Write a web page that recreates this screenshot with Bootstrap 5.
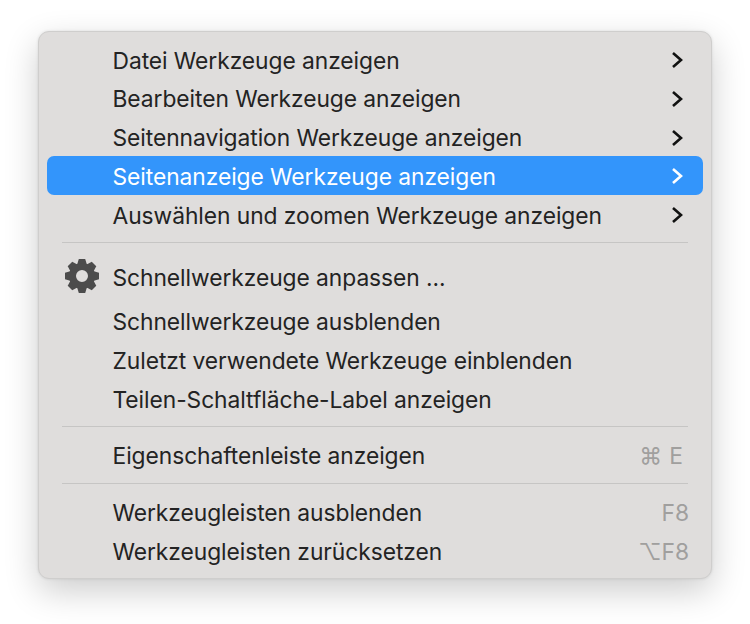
<!DOCTYPE html>
<html lang="de">
<head>
    <meta charset="UTF-8">
    <meta name="viewport" content="width=device-width, initial-scale=1.0">
    <title>Werkzeuge Menü</title>
    <link href="https://cdn.jsdelivr.net/npm/bootstrap@5.3.0/dist/css/bootstrap.min.css" rel="stylesheet">
    <style>
        body { background: #fff; font-family: "Inter", "Liberation Sans", sans-serif; padding: 31px 38px 0; min-height: 624px; }
        .ctx-menu.dropdown-menu {
            position: static; display: block; width: 674px; height: 548px; padding: 8px 8px 7px;
            background: #dfdddc; border: 1px solid #cfcecd; border-radius: 11px;
            box-shadow: 0 12px 34px rgba(0, 0, 0, .2), 0 0 3px rgba(0, 0, 0, .1);
        }
        .ctx-menu .dropdown-item {
            height: 38.7px; padding: 3px 14px 0 65.5px; border-radius: 7px;
            font-size: 22.8px; letter-spacing: -.06px; color: #232323; background: transparent;
        }
        .ctx-menu .dropdown-item.active { background: #3395fb; color: #fff; }
        .ctx-menu .gear-row { height: 50px; padding-left: 17px; }
        .ctx-menu .dropdown-divider { margin: 8.5px 15px; border-top: 1.5px solid #c6c5c4; opacity: 1; }
        .gear-icon { width: 36px; height: 36px; margin: -4px 12.5px 0 0; }
        .chev { width: 12px; height: 18px; margin: -1px 6px 0 0; }
        .keys { color: #a09f9e; font-size: 22.8px; }
        .keys-cmd { margin-right: 6px; word-spacing: 1px; }
    </style>
</head>
<body>
    <div class="dropdown-menu ctx-menu">
        <a class="dropdown-item d-flex align-items-center justify-content-between" href="#">Datei Werkzeuge anzeigen
            <svg class="chev" viewBox="0 0 12 18"><path d="M2 2l8 7-8 7" fill="none" stroke="#111" stroke-width="2.6"/></svg></a>
        <a class="dropdown-item d-flex align-items-center justify-content-between" href="#">Bearbeiten Werkzeuge anzeigen
            <svg class="chev" viewBox="0 0 12 18"><path d="M2 2l8 7-8 7" fill="none" stroke="#111" stroke-width="2.6"/></svg></a>
        <a class="dropdown-item d-flex align-items-center justify-content-between" href="#">Seitennavigation Werkzeuge anzeigen
            <svg class="chev" viewBox="0 0 12 18"><path d="M2 2l8 7-8 7" fill="none" stroke="#111" stroke-width="2.6"/></svg></a>
        <a class="dropdown-item active d-flex align-items-center justify-content-between" href="#">Seitenanzeige Werkzeuge anzeigen
            <svg class="chev" viewBox="0 0 12 18"><path d="M2 2l8 7-8 7" fill="none" stroke="#fff" stroke-width="2.6"/></svg></a>
        <a class="dropdown-item d-flex align-items-center justify-content-between" href="#">Auswählen und zoomen Werkzeuge anzeigen
            <svg class="chev" viewBox="0 0 12 18"><path d="M2 2l8 7-8 7" fill="none" stroke="#111" stroke-width="2.6"/></svg></a>
        <hr class="dropdown-divider">
        <a class="dropdown-item gear-row d-flex align-items-center" href="#">
            <svg class="gear-icon" viewBox="0 0 36 36"><g fill="#4c4c4c"><polygon points="14.8,1 21.2,1 23,7 13,7"/><polygon points="14.8,1 21.2,1 23,7 13,7" transform="rotate(45 18 18)"/><polygon points="14.8,1 21.2,1 23,7 13,7" transform="rotate(90 18 18)"/><polygon points="14.8,1 21.2,1 23,7 13,7" transform="rotate(135 18 18)"/><polygon points="14.8,1 21.2,1 23,7 13,7" transform="rotate(180 18 18)"/><polygon points="14.8,1 21.2,1 23,7 13,7" transform="rotate(225 18 18)"/><polygon points="14.8,1 21.2,1 23,7 13,7" transform="rotate(270 18 18)"/><polygon points="14.8,1 21.2,1 23,7 13,7" transform="rotate(315 18 18)"/></g><circle cx="18" cy="18" r="9.5" fill="none" stroke="#4c4c4c" stroke-width="7"/></svg>
            Schnellwerkzeuge anpassen ...</a>
        <a class="dropdown-item d-flex align-items-center" href="#">Schnellwerkzeuge ausblenden</a>
        <a class="dropdown-item d-flex align-items-center" href="#">Zuletzt verwendete Werkzeuge einblenden</a>
        <a class="dropdown-item d-flex align-items-center" href="#">Teilen-Schaltfläche-Label anzeigen</a>
        <hr class="dropdown-divider">
        <a class="dropdown-item d-flex align-items-center justify-content-between" href="#">Eigenschaftenleiste anzeigen
            <span class="keys keys-cmd">⌘ E</span></a>
        <hr class="dropdown-divider">
        <a class="dropdown-item d-flex align-items-center justify-content-between" href="#">Werkzeugleisten ausblenden
            <span class="keys">F8</span></a>
        <a class="dropdown-item d-flex align-items-center justify-content-between" href="#">Werkzeugleisten zurücksetzen
            <span class="keys">⌥F8</span></a>
    </div>
    <script src="https://cdn.jsdelivr.net/npm/bootstrap@5.3.0/dist/js/bootstrap.bundle.min.js"></script>
</body>
</html>
